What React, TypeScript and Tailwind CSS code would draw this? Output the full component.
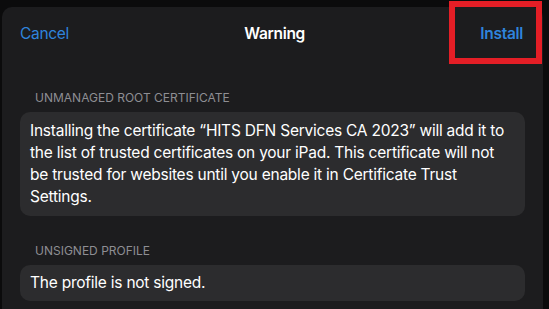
export default function App() {
  return (
    <div className="relative h-[309px] w-[549px] overflow-hidden bg-[#0b0b0c] pl-[2px] pr-[6px] pt-[7px] font-['Inter','Noto_Sans',sans-serif] antialiased">
      <div className="h-full rounded-t-[10px] bg-[#1c1c1e]">
        <div className="flex h-[54px] items-center justify-between pl-[18px] pr-[20px] text-[15.5px] tracking-[-0.02em]">
          <span className="text-[#2f84dc]">Cancel</span>
          <span className="font-semibold text-white">Warning</span>
          <span className="font-semibold text-[#2f84dc]">Install</span>
        </div>

        <div className="px-[18px]">
          <div className="pl-[15px] pt-[29px] pb-[7px] text-[12px] leading-[15px] text-[#8e8e93]">UNMANAGED ROOT CERTIFICATE</div>
          <div className="rounded-[10px] bg-[#2c2c2e] pl-[10px] pr-[18px] py-[8px] text-[15.5px] leading-[22px] tracking-[-0.015em] text-white">
            Installing the certificate “HITS DFN Services CA 2023” will add it to the list of trusted certificates on your iPad. This certificate will not be trusted for websites until you enable it in Certificate Trust Settings.
          </div>

          <div className="pl-[15px] pt-[27px] pb-[7px] text-[12px] leading-[15px] text-[#8e8e93]">UNSIGNED PROFILE</div>
          <div className="flex h-[36px] items-center rounded-[10px] bg-[#2c2c2e] px-[10px] text-[15.5px] tracking-[-0.015em] text-white">
            The profile is not signed.
          </div>
        </div>
      </div>

      <div className="absolute left-[449px] top-[1px] h-[63px] w-[93px] border-[6px] border-[#e41e26]" />
    </div>
  );
}
